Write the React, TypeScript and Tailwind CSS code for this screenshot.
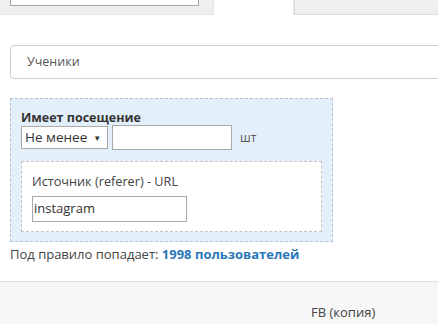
import React from 'react'

const font = { fontFamily: '"Open Sans", "Liberation Sans", sans-serif' }

export default function App() {
  return (
    <div className="h-[324px] w-[438px] overflow-hidden bg-white text-[#333]" style={font}>
      {/* tabs strip */}
      <div className="flex h-[15px]">
        <div className="w-[214px] border-b border-r border-[#e3e3e3] bg-[#efefef] pl-[10px]">
          <div className="h-[6px] w-[189px] border-x border-b border-[#a9a9a9] bg-white" />
        </div>
        <div className="w-[80px] border-r border-[#e6e6e6] bg-white" />
        <div className="flex-1 border-b border-l border-[#dcdcdc] bg-[#efefef]" />
      </div>

      <div className="pl-[10px] pt-[30px]">
        <div className="flex h-[34px] w-[440px] items-center rounded-l-[4px] border border-[#cfcfcf] pl-[16px] text-[12.5px] text-[#555]">
          Ученики
        </div>

        <div className="mt-[19px] w-[323px] border border-dashed border-[#b5c3d3] bg-[#e3effb] px-[10px] pb-[9px] pt-[11px]">
          <div className="text-[12.5px] font-bold leading-[15px] text-[#333]">Имеет посещение</div>
          <div className="flex items-center">
            <div className="flex h-[23px] w-[87px] items-center border border-[#a9a9a9] bg-white pl-[3px] text-[13.5px] text-[#333]">
              Не менее
              <span className="ml-[6px] text-[8px]">▼</span>
            </div>
            <div className="ml-[4px] h-[25px] w-[120px] border border-[#a9a9a9] bg-white" />
            <span className="ml-[8px] text-[12px] text-[#555]">шт</span>
          </div>
          <div className="mt-[11px] border border-dashed border-[#c2c2c2] bg-white px-[10px] pb-[9px] pt-[11px]">
            <div className="text-[12.7px] leading-[17px] text-[#444]">Источник (referer) - URL</div>
            <div className="mt-[6px] flex h-[26px] w-[155px] items-center border border-[#a9a9a9] pl-[1px] text-[13px] text-[#333]">
              instagram
            </div>
          </div>
        </div>

        <div className="mt-[4px] text-[13px] leading-[16px] text-[#444]">
          Под правило попадает: <span className="font-bold text-[#2a78b8]">1998 пользователей</span>
        </div>
      </div>

      <div className="mt-[19px] h-[60px] border-t border-[#dedede] bg-[#f7f7f7] pl-[311px] pt-[21px] text-[13px] text-[#444]">
        FB (копия)
      </div>
    </div>
  )
}
